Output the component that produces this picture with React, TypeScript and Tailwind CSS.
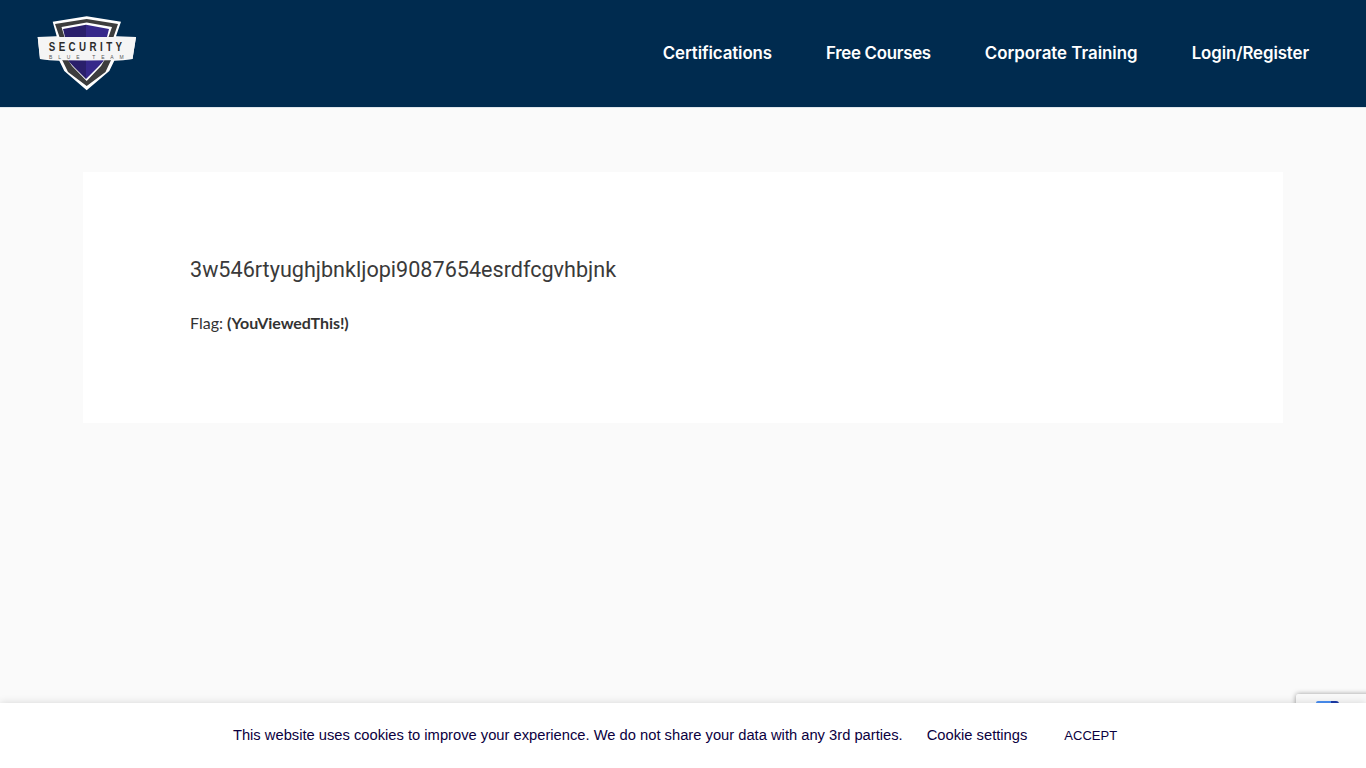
import React from 'react';

const navLinks = [
  { label: 'Certifications', className: 'tracking-[-0.1px]' },
  { label: 'Free Courses', className: 'tracking-[-0.27px]' },
  { label: 'Corporate Training', className: 'tracking-[0px]' },
  { label: 'Login/Register', className: 'tracking-[-0.1px]' },
];

const Logo = () => (
  <svg width="100" height="75" viewBox="0 0 100 75" className="block">
    {/* outer white shield */}
    <path d="M49.700 0.300 L84 5.700 L79 20.300 L99 21 L95.500 43 Q86 44.500 77.300 44.700 L72.300 55 L49.700 74.300 L27.300 55 L22.300 44.700 Q12 44.500 3 43 L0.700 21 L19.700 20.300 L15.700 5.700 Z" fill="#ffffff" />
    {/* dark rim */}
    <path d="M49.700 3 L81 8 L76.500 21 L74.500 43 L68.500 56 L49.700 70 L31 56 L24.700 43 L22.500 21 L18 8 Z" fill="#3d3d3d" />
    <path d="M49.700 6.500 L75 11 L71.500 21 L68 43 L64 50 L49.700 65 L35 50 L30.500 43 L27.500 21 L24.500 11 Z" fill="#ffffff" />
    {/* purple inner */}
    <path d="M49 8.700 L49 63 L36 50 L31.500 45 L28 21 L26 13 Z" fill="#2a1f6b" />
    <path d="M49 8.700 L72 13 L70 21 L66.500 45 L62 50 L49 63 Z" fill="#36288a" />
    {/* banner */}
    <path d="M0.700 21 L99 21 L95.500 43 Q50 46 3 43 Z" fill="#f5f5f5" />
    <text transform="translate(11.700 35) scale(0.75 1)" fontFamily="'Liberation Sans', sans-serif" fontWeight="700" fontSize="13" letterSpacing="4.600" fill="#2b2b2b">SECURITY</text>
    <text x="12" y="42.500" fontFamily="'Liberation Sans', sans-serif" fontSize="5" letterSpacing="5.800" fill="#555555">BLUE TEAM</text>
  </svg>
);

export default function App() {
  return (
    <div className="relative h-[768px] overflow-hidden bg-[#fafafa]">
      <header className="flex h-[108px] items-center justify-between border-b border-[#dfe6ec] bg-[#002b4f] pl-[37px] pr-[57px]">
        <Logo />
        <nav className="flex gap-[54px] pt-[1px]">
          <a className={`font-['Inter',sans-serif] text-[16.850px] font-semibold text-white ${navLinks[0].className}`}>{navLinks[0].label}</a>
          <a className={`font-['Inter',sans-serif] text-[16.850px] font-semibold text-white ${navLinks[1].className}`}>{navLinks[1].label}</a>
          <a className={`font-['Inter',sans-serif] text-[16.850px] font-semibold text-white ${navLinks[2].className}`}>{navLinks[2].label}</a>
          <a className={`font-['Inter',sans-serif] text-[16.850px] font-semibold text-white ${navLinks[3].className}`}>{navLinks[3].label}</a>
        </nav>
      </header>

      <main className="px-[83px] pt-[64px]">
        <div className="h-[251px] bg-white px-[107px] pt-[81px]">
          <h1 className="font-['Roboto',sans-serif] text-[21.600px] leading-[34px] font-normal text-[#3a3a3a]">
            3w546rtyughjbnkljopi9087654esrdfcgvhbjnk
          </h1>
          <p className="mt-[24px] font-['Lato',sans-serif] text-[16px] leading-[24px] text-[#333333]">
            Flag: <strong className="font-bold tracking-[-0.07px]">(YouViewedThis!)</strong>
          </p>
        </div>
      </main>

      {/* recaptcha badge peeking out behind the cookie bar */}
      <div className="absolute top-[694px] left-[1296px] h-[60px] w-[256px] rounded-[2px] bg-[#f9f9f9] shadow-[0_0_5px_rgba(128,128,128,0.8)]">
        <div className="mt-[7px] ml-[20px] flex h-[3px] w-[23px]">
          <div className="w-[15px] rounded-tl-[2px] bg-[#4a90f5]" />
          <div className="w-[8px] rounded-tr-[4px] bg-[#1c3aa9]" />
        </div>
      </div>

      <div className="absolute right-0 bottom-0 left-0 flex h-[65px] items-center justify-center bg-white pr-[16px] font-['Liberation_Sans',sans-serif] text-[#0b0040] shadow-[0_0_8px_rgba(0,0,0,0.15)]">
        <span className="text-[14.720px]">This website uses cookies to improve your experience. We do not share your data with any 3rd parties.</span>
        <a className="ml-[24px] text-[14.720px]">Cookie settings</a>
        <a className="ml-[37px] text-[13px]">ACCEPT</a>
      </div>
    </div>
  );
}
